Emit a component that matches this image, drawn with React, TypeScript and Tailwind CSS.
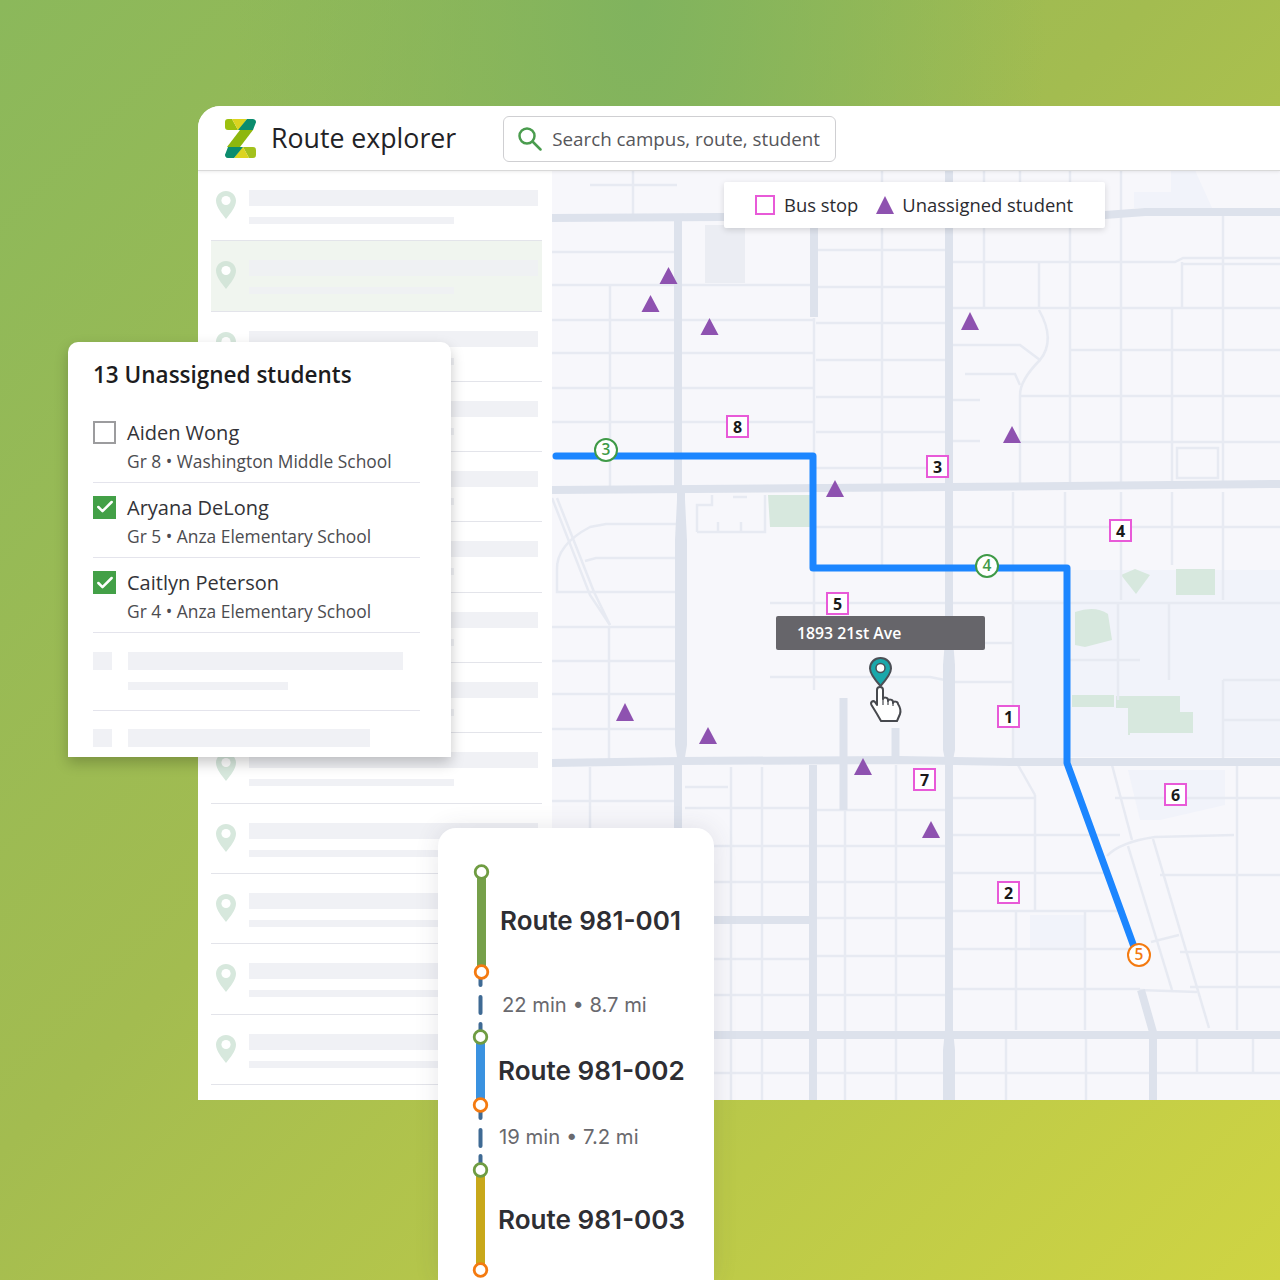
import { Check } from 'lucide-react';

const majors = [
  'M552 218 L1105 215 L1145 212 H1280',
  'M552 490 L950 487 L1280 484',
  'M552 763 L680 761 L900 760 L1010 762 H1280',
  'M714 1035 H1280',
  'M714 920 H812',
  'M678 218 V490',
  'M681 490 V761',
  'M678 761 V830',
  'M814 228 V317',
  'M949 170 V1100',
  'M813 765 V1100',
  'M843.5 698 V810',
  'M895.5 728 V758',
  'M1141 990 L1153 1032 V1100',
];

// stretches where a road flares out a little
const wideRoads = [
  'M677 500 L675 540 V745 L677 757 H685 L687 745 V540 L685 500Z',
  'M945 640 L943 665 V750 L945 760 H953 L955 750 V665 L953 640Z',
  'M945 1030 L943 1050 V1100 H955 V1050 L953 1030Z',
];

const minors = [
  // top left blocks
  'M552 252 H677', 'M552 285 H814', 'M552 320 H814', 'M552 353 H814', 'M552 388 H814', 'M552 422 H814', 'M633 170 V218', 'M610 285 V490',
  'M590 185 H677',
  // centre blocks above the second road
  'M816 250 H949', 'M816 287 H949', 'M816 323 H949', 'M816 360 H949', 'M816 397 H949', 'M816 432 H949', 'M816 468 H949', 'M882 170 V488', 'M814 318 V490',
  // right blocks
  'M953 262 H1175 L1183 258 H1280', 'M1183 264 H1280', 'M953 308 H1280', 'M1070 350 H1280', 'M1020 396 H1280', 'M1020 442 H1280',
  'M984 170 V308', 'M1020 170 V212', 'M1039 262 V308', 'M1070 170 V488', 'M1121 170 V488', 'M1172 308 V488', 'M1223 215 V488', 'M1182 262 V308',
  'M1039 310 Q1056 340 1040 360 Q1020 380 1020 395 V488', 'M953 345 H1020 L1040 360', 'M965 374 H1015 L1020 385', 'M953 400 H980', 'M953 441 H980',
  'M1177 448 H1218 V478 H1177 Z',
  // below second road
  'M816 527 H1280', 'M882 490 V570', 'M1013 492 V760', 'M1065 492 V570', 'M1121 492 V600', 'M1172 492 V565', 'M1223 492 V600',
  'M770 603 H1280', 'M953 643 H1013', 'M1070 660 H1140', 'M770 677 H930 L945 680', 'M953 682 H1013', 'M814 570 V690',
  'M1118 603 V700', 'M1169 603 V680', 'M1223 680 V760', 'M1223 680 H1280', 'M1223 720 H1280',
  // left side, diagonals and the crescent
  'M552 498 L590 595 L610 625', 'M557 498 L594 592 L610 625', 'M557 570 L557 592 H677', 'M557 570 Q556 545 590 527 L606 524 H677', 'M585 561 L596 558 H677',
  'M552 627 H677', 'M552 661 H677', 'M609 627 V760', 'M552 694 H677', 'M552 729 H677',
  'M697 532 V505 H712 V495', 'M697 532 H765 V495', 'M718 532 V522', 'M741 532 V522', 'M733 497 H747',
  // below the third road
  'M590 767 V830', 'M552 801 H677', 'M685 787 H728', 'M685 808 H810', 'M731 767 V1100', 'M762 767 V1100', 'M714 846 H810', 'M714 882 H810', 'M714 959 H810', 'M714 995 H810', 'M714 1073 H1280',
  'M845 810 V1100', 'M896 765 V1100', 'M816 810 H945', 'M816 846 H945', 'M816 882 H945', 'M816 918 H945', 'M816 956 H945', 'M816 995 H945',
  'M953 798 H1035', 'M953 835 H1120', 'M953 873 H1110', 'M953 911 H1125', 'M953 949 H1140', 'M953 989 H1140',
  'M1035 795 V911', 'M1018 765 L1035 795', 'M1016 911 V1030', 'M1085 911 V1030', 'M1006 1035 V1100', 'M1086 1035 V1100', 'M1197 1035 V1073', 'M1253 1035 V1073',
  'M1112 765 L1132 840', 'M1153 839 L1209 1028', 'M1128 846 L1172 990', 'M1107 856 Q1120 842 1155 837 L1234 835',
  'M1179 935 L1151 942', 'M1139 990 L1197 992', 'M1115 798 H1280', 'M1237 765 V1030', 'M1160 875 H1280', 'M1180 952 H1280', 'M1190 987 H1280',
];

const triangles = [
  'M668.5 267 L677.5 284 H659.5 Z', 'M650.5 295 L659.5 312 H641.5 Z', 'M709.5 318 L718.5 335 H700.5 Z', 'M970 312 L979 330 H961 Z', 'M1012 426 L1021 443 H1003 Z',
  'M835 480 L844 497 H826 Z', 'M625 703 L634 721 H616 Z', 'M708 727 L717 744 H699 Z', 'M863 758 L872 775 H854 Z', 'M931 821 L940 838 H922 Z',
];

const stops = [
  { n: 8, pos: 'left-[174px] top-[245px]' },
  { n: 3, pos: 'left-[374px] top-[285px]' },
  { n: 4, pos: 'left-[557px] top-[349px]' },
  { n: 5, pos: 'left-[274px] top-[422px]' },
  { n: 1, pos: 'left-[445px] top-[535px]' },
  { n: 7, pos: 'left-[361px] top-[598px]' },
  { n: 6, pos: 'left-[612px] top-[613px]' },
  { n: 2, pos: 'left-[445px] top-[711px]' },
];

const students = [
  { name: 'Aiden Wong', info: 'Gr 8 • Washington Middle School', checked: false },
  { name: 'Aryana DeLong', info: 'Gr 5 • Anza Elementary School', checked: true },
  { name: 'Caitlyn Peterson', info: 'Gr 4 • Anza Elementary School', checked: true },
];

function Logo() {
  return (
    <svg width="31" height="39" viewBox="0 0 31 39" className="shrink-0">
      <path d="M15 11H28L15 28H2Z" fill="#8db70e" />
      <path d="M3 0H7L13 11H3A3 3 0 0 1 0 8V3A3 3 0 0 1 3 0Z" fill="#9cc00f" />
      <path d="M7 0H22L15 9.5L13 11Z" fill="#dcd420" />
      <path d="M22 0H28A3 3 0 0 1 30.5 4.6L28 11H13Z" fill="#0b8c6e" />
      <g transform="rotate(180 15.5 19.5)">
        <path d="M3 0H7L13 11H3A3 3 0 0 1 0 8V3A3 3 0 0 1 3 0Z" fill="#a3c11c" />
        <path d="M7 0H22L15 9.5L13 11Z" fill="#dcd420" />
        <path d="M22 0H28A3 3 0 0 1 30.5 4.6L28 11H13Z" fill="#0b8c6e" />
      </g>
    </svg>
  );
}

function SidebarRow({ selected }: { selected?: boolean }) {
  return (
    <div className={`flex h-[70.3px] shrink-0 gap-[13px] border-b border-[#e3e4ea] pl-[5px] pr-[4px] pt-[19px] ${selected ? 'bg-[#f0f5ef]' : ''}`}>
      <svg width="20" height="28" viewBox="0 0 20 28" className="mt-[1px] shrink-0">
        <path d="M10 0C4.5 0 0 4.3 0 9.8C0 16 6 23 10 28C14 23 20 16 20 9.8C20 4.3 15.5 0 10 0Z" fill={selected ? '#d4e5d9' : '#d7e8dd'} />
        <circle cx="10" cy="9.5" r="4.6" fill="#ffffff" />
      </svg>
      <div className="flex-1">
        <div className={`h-[16px] ${selected ? 'bg-[#eff1f3]' : 'bg-[#f0f1f5]'}`} />
        <div className={`mt-[11px] h-[7px] w-[205px] ${selected ? 'bg-[#eff1f3]' : 'bg-[#f0f1f5]'}`} />
      </div>
    </div>
  );
}

function MapDrawing() {
  return (
    <svg viewBox="552 170 728 930" className="block h-full w-full bg-[#f7f7fb]">
      <g fill="#f1f3fa">
        <path d="M1013 600 H1066 V760 H1013 Z" />
        <path d="M1070 570 H1280 V757 H1070 Z" />
        <path d="M1171 170 H1195 L1212 208 H1134 V192 H1171 Z" />
        <path d="M1128 770 H1225 V805 L1160 820 H1140 Z" />
        <path d="M1030 915 H1085 V948 H1030 Z" />
      </g>
      <rect x="705" y="225" width="40" height="58" fill="#ebedf3" />
      <g fill="#d7e8de">
        <path d="M768 495 H810 V527 H770 Z" />
        <path d="M1135 569 L1150 575 L1136 594 L1121 575 Z" />
        <path d="M1176 569 H1215 V595 H1176 Z" />
        <path d="M1075 612 Q1095 605 1108 614 L1112 640 L1085 647 L1075 645 Z" />
        <path d="M1072 695 H1114 V707 H1072 Z" />
        <path d="M1116 696 H1180 V712 H1193 V733 H1130 V735 H1128 V708 H1116 Z" />
      </g>
      <g fill="none" stroke="#e7eaf2" strokeWidth="2.5">
        {minors.map((d) => (
          <path key={d} d={d} />
        ))}
      </g>
      <g fill="none" stroke="#dde2ec" strokeWidth="8">
        {majors.map((d) => (
          <path key={d} d={d} />
        ))}
      </g>
      <g fill="#dde2ec">
        {wideRoads.map((d) => (
          <path key={d} d={d} />
        ))}
      </g>
      <path d="M556 456 H813 V568 H1067 V763 L1137 955" fill="none" stroke="#1c86ff" strokeWidth="7" strokeLinecap="round" strokeLinejoin="round" />
      <g fill="#8e52b0">
        {triangles.map((d) => (
          <path key={d} d={d} />
        ))}
      </g>
      {/* hand cursor + pin */}
      <path d="M877 690C877 686 883 686 883 690V699C883 697 888 697 888 700V701C888 699 893 699 893 702V703C893 701 898 701 898 704C900 707 901 711 900 714L897 721H881L877 714L871.5 705C870 702 873 700 875 702L877 705Z" fill="#ffffff" stroke="#47494e" strokeWidth="2" strokeLinejoin="round" />
      <path d="M883 699V705M888 701V705M893 703V706" stroke="#47494e" strokeWidth="1.2" fill="none" />
      <path d="M880.5 658C874.5 658 870 662.5 870 668.5C870 674 876 681 880.5 686C885 681 891 674 891 668.5C891 662.5 886.5 658 880.5 658Z" fill="#1ba8ab" stroke="#4b4f55" strokeWidth="2" />
      <circle cx="880.5" cy="668" r="4.5" fill="#ffffff" stroke="#4b4f55" strokeWidth="1.5" />
    </svg>
  );
}

function RouteLine() {
  const bar = (d: string, color: string) => <path d={d} stroke={color} strokeWidth="9" fill="none" />;
  const dash = (d: string) => <path d={d} stroke="#3f6a94" strokeWidth="4" strokeLinecap="round" fill="none" />;
  const dot = (x: number, y: number, color: string) => <circle cx={x} cy={y} r="6.3" fill="#ffffff" stroke={color} strokeWidth="2.8" />;
  return (
    <svg viewBox="438 828 60 452" className="h-[452px] w-[60px] shrink-0">
      {bar('M481.5 872V972', '#76a04a')}
      {dash('M480.5 979V985')}
      {dash('M480.5 997V1013')}
      {dash('M480.5 1024V1031')}
      {bar('M480.5 1037V1105', '#3a92e0')}
      {dash('M480.5 1112V1118')}
      {dash('M480.5 1130V1146')}
      {dash('M480.5 1156V1164')}
      {bar('M480.5 1170V1270', '#c8a81a')}
      {dot(481.5, 872, '#6f9c42')}
      {dot(481.5, 972, '#f47a10')}
      {dot(480.5, 1037, '#6f9c42')}
      {dot(480.5, 1105, '#f47a10')}
      {dot(480.5, 1170, '#6f9c42')}
      {dot(480.5, 1270, '#f47a10')}
    </svg>
  );
}

export default function App() {
  return (
    <div className="relative h-[1280px] w-[1280px] overflow-hidden bg-[radial-gradient(ellipse_at_50%_0%,#80b35e_0%,rgba(128,179,94,0)_45%),linear-gradient(135deg,#8bb85b_0%,#a3bc50_45%,#cfd443_100%)] pl-[198px] pt-[106px] font-['Open_Sans',sans-serif]">
      <div className="flex h-[994px] w-[1082px] flex-col overflow-hidden rounded-tl-[22px] bg-white">
        <header className="z-10 flex h-[65px] shrink-0 items-center border-b border-[#d9d9d9] bg-white pl-[27px] shadow-[0_1px_3px_rgba(0,0,0,0.08)]">
          <Logo />
          <h1 className="ml-[15px] text-[26.7px] font-medium leading-none text-[#222226]">Route explorer</h1>
          <div className="ml-[47px] mt-[2px] flex h-[46px] w-[333px] items-center gap-[10px] rounded-[6px] border border-[#cfcfd2] pl-[14px]">
            <svg width="24" height="24" viewBox="0 0 24 24" fill="none" stroke="#4a9c4e" strokeWidth="2.5" strokeLinecap="round" className="shrink-0">
              <circle cx="9" cy="9" r="7.5" />
              <path d="M14.5 14.5L22.5 22.5" />
            </svg>
            <span className="text-[18.8px] text-[#56565a]">Search campus, route, student</span>
          </div>
        </header>
        <div className="flex min-h-0 flex-1">
          <aside className="z-[1] w-[354px] shrink-0 bg-white pl-[13px] pr-[10px]">
            <div className="flex flex-col">
              {Array.from({ length: 13 }, (_, i) => (
                <SidebarRow key={i} selected={i === 1} />
              ))}
            </div>
          </aside>
          <main className="relative -mt-px flex-1">
            <MapDrawing />
            <div className="absolute left-[172px] top-[12px] flex h-[46px] w-[381px] items-center rounded-[2px] bg-white pl-[31px] shadow-[0_2px_6px_rgba(0,0,0,0.14)]">
              <span className="h-[20px] w-[20px] border-[2.5px] border-[#e85ad8]" />
              <span className="ml-[9px] text-[18.4px] text-[#2b2b30]">Bus stop</span>
              <svg width="18" height="18" viewBox="0 0 18 18" className="ml-[18px]">
                <path d="M9 0L18 18H0Z" fill="#8e52b0" />
              </svg>
              <span className="ml-[8px] text-[18.4px] text-[#2b2b30]">Unassigned student</span>
            </div>
            {stops.map((s) => (
              <div key={s.n} className={`absolute flex h-[23px] w-[23px] items-center justify-center border-[2.5px] border-[#e85ad8] bg-white text-[16px] font-bold leading-none text-[#1a1a1a] ${s.pos}`}>
                {s.n}
              </div>
            ))}
            <div className="absolute left-[42px] top-[268px] flex h-[24px] w-[24px] items-center justify-center rounded-full border-[2.5px] border-[#3f9a47] bg-white text-[15.5px] font-semibold leading-none text-[#3f9a47]">3</div>
            <div className="absolute left-[423px] top-[384px] flex h-[24px] w-[24px] items-center justify-center rounded-full border-[2.5px] border-[#3f9a47] bg-white text-[15.5px] font-semibold leading-none text-[#3f9a47]">4</div>
            <div className="absolute left-[575px] top-[773px] flex h-[24px] w-[24px] items-center justify-center rounded-full border-[2.5px] border-[#f47a10] bg-white text-[15.5px] font-semibold leading-none text-[#f47a10]">5</div>
            <div className="absolute left-[224px] top-[446px] flex h-[34px] w-[209px] items-center rounded-[2px] bg-[#66656a] pl-[21px] pt-[1px] text-[15.8px] font-semibold text-white">1893 21st Ave</div>
          </main>
        </div>
      </div>

      {/* floating students panel */}
      <section className="absolute left-[68px] top-[342px] z-20 h-[415px] w-[383px] rounded-t-[10px] bg-white pl-[25px] pr-[31px] pt-[18px] shadow-[0_6px_14px_rgba(0,0,0,0.22)]">
        <h2 className="text-[22.5px] font-semibold leading-[30px] text-[#1c1c20]">13 Unassigned students</h2>
        <div className="mt-[17.5px]">
          {students.map((s) => (
            <div key={s.name} className="flex h-[75.3px] gap-[11px] border-b border-[#e4e4ec] pt-[13px]">
              {s.checked ? (
                <span className="flex h-[23px] w-[23px] shrink-0 items-center justify-center bg-[#43a047]">
                  <Check size={20} color="#ffffff" strokeWidth={3} />
                </span>
              ) : (
                <span className="h-[23px] w-[23px] shrink-0 border-2 border-[#9c9c9e] bg-white" />
              )}
              <div>
                <div className="-mt-px text-[20px] leading-[26px] text-[#333338]">{s.name}</div>
                <div className="mt-[4px] text-[17.4px] leading-[22px] text-[#4c4c50]">{s.info}</div>
              </div>
            </div>
          ))}
        </div>
        <div className="flex h-[78px] gap-[16px] border-b border-[#e4e4ec] pt-[19px]">
          <div className="h-[18px] w-[19px] shrink-0 bg-[#f0f1f5]" />
          <div className="flex-1">
            <div className="h-[18px] w-[275px] bg-[#f0f1f5]" />
            <div className="mt-[12px] h-[8px] w-[160px] bg-[#f0f1f5]" />
          </div>
        </div>
        <div className="flex gap-[16px] pt-[18px]">
          <div className="h-[18px] w-[19px] shrink-0 bg-[#f0f1f5]" />
          <div className="h-[18px] w-[242px] bg-[#f0f1f5]" />
        </div>
      </section>

      {/* floating route card */}
      <section className="absolute left-[438px] top-[828px] z-20 flex h-[452px] w-[276px] rounded-t-[18px] bg-white font-['Inter',sans-serif] shadow-[0_0_24px_rgba(60,60,80,0.12)]">
        <RouteLine />
        <div className="flex flex-col pt-[76px]">
          <div className="ml-[2px] h-[34px] text-[26px] font-semibold leading-[34px] text-[#2e2e33]">Route 981-001</div>
          <div className="ml-[4px] mt-[50px] h-[34px] text-[20.2px] leading-[34px] text-[#69696e]">22 min • 8.7 mi</div>
          <div className="mt-[32px] h-[34px] text-[26.1px] font-semibold leading-[34px] text-[#2e2e33]">Route 981-002</div>
          <div className="ml-[1px] mt-[32px] h-[34px] text-[20.3px] leading-[34px] text-[#69696e]">19 min • 7.2 mi</div>
          <div className="mt-[49px] h-[34px] text-[26.1px] font-semibold leading-[34px] text-[#2e2e33]">Route 981-003</div>
        </div>
      </section>
    </div>
  );
}
